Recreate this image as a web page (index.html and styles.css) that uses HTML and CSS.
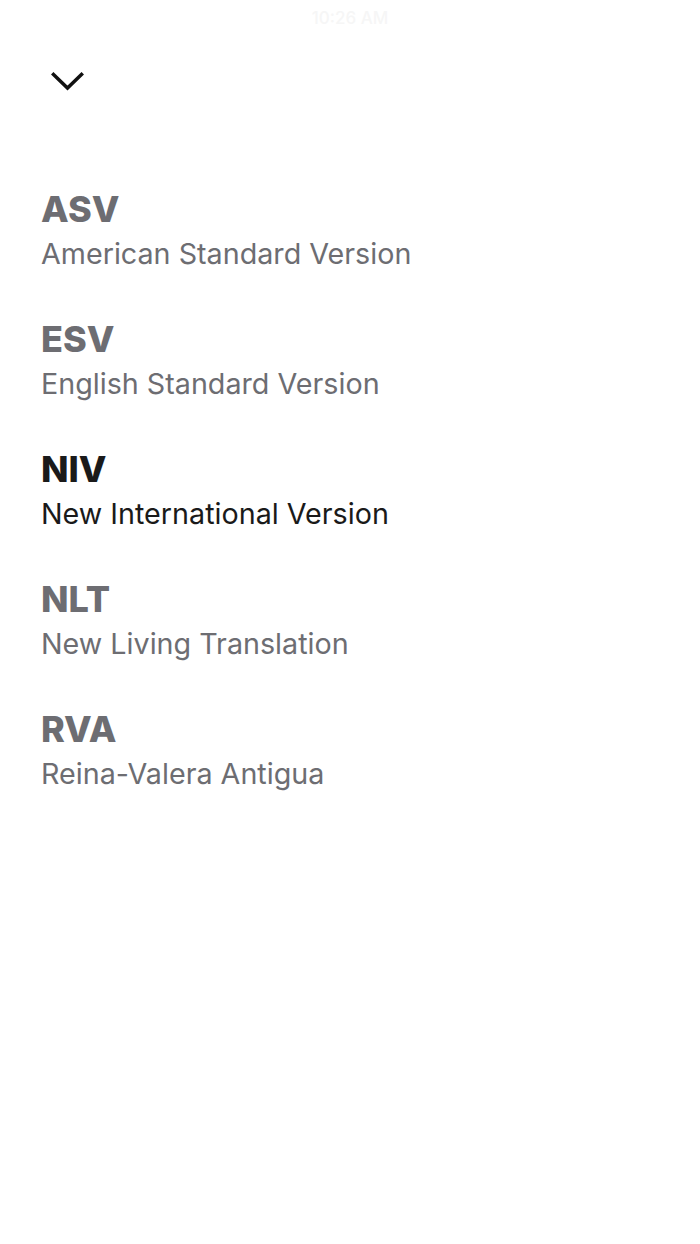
FILE: index.html
```html
<!DOCTYPE html>
<html lang="en">
<head>
<meta charset="utf-8">
<title>Versions</title>
<link rel="stylesheet" href="styles.css">
</head>
<body>
<div class="status">10:26 AM</div>
<header class="top">
  <button class="close" aria-label="Close">
    <svg width="36" height="22" viewBox="0 0 36 22"><path d="M3.5 4.5 L17.5 18 L31.5 4.5" fill="none" stroke="#111111" stroke-width="3.5" stroke-linecap="square" stroke-linejoin="miter"/></svg>
  </button>
</header>
<ul class="versions">
  <li class="version"><div class="abbr">ASV</div><div class="name">American Standard Version</div></li>
  <li class="version"><div class="abbr">ESV</div><div class="name">English Standard Version</div></li>
  <li class="version active"><div class="abbr">NIV</div><div class="name">New International Version</div></li>
  <li class="version"><div class="abbr">NLT</div><div class="name">New Living Translation</div></li>
  <li class="version"><div class="abbr">RVA</div><div class="name">Reina-Valera Antigua</div></li>
</ul>
</body>
</html>
```
FILE: styles.css
```css
html, body {
  margin: 0;
  padding: 0;
  background: #ffffff;
  font-family: Inter, "Liberation Sans", Arial, sans-serif;
}
.status {
  height: 36px;
  line-height: 37px;
  text-align: center;
  font-size: 17px;
  font-weight: 500;
  color: #f6f6f6;
}
.top {
  padding: 34px 0 0 50px;
  height: 22px;
}
.close {
  display: block;
  padding: 0;
  margin: 0;
  border: 0;
  background: none;
  width: 36px;
  height: 22px;
}
.close svg { display: block; }
.versions {
  list-style: none;
  margin: 91px 0 0 0;
  padding: 0 0 0 41px;
  display: flex;
  flex-direction: column;
  gap: 41px;
}
.version { color: #6d6d72; }
.abbr {
  font-size: 36px;
  font-weight: 800;
  line-height: 53px;
}
.name {
  font-size: 28.7px;
  line-height: 36px;
}
.version.active { color: #1a1a1a; }
```
